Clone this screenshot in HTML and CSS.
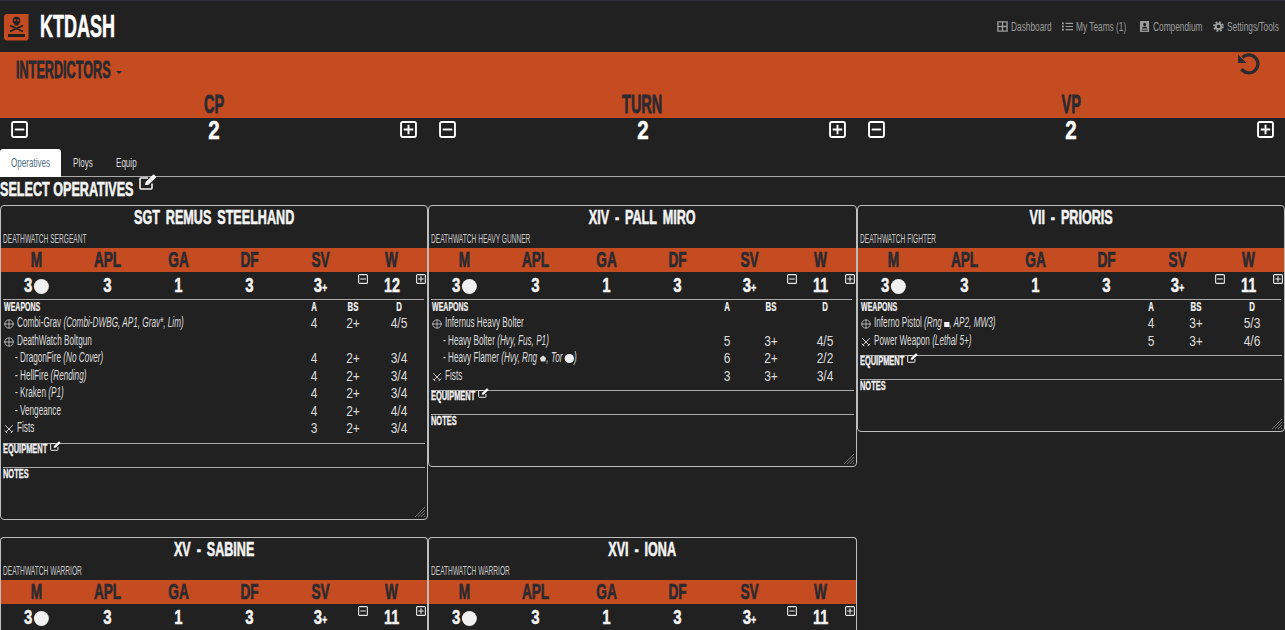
FILE: index.html
```html
<!DOCTYPE html>
<html lang="en">
  <head>
    <meta charset="UTF-8" />
    <title>KTDASH</title>
    <link rel="stylesheet" href="styles.css">
  </head>
  <body>
    <svg class="defs" aria-hidden="true">
      <symbol id="i-minus" viewBox="0 0 16 16"><rect x="1" y="1" width="14" height="14" rx="1.5" fill="none" stroke="currentColor" stroke-width="1.8"/><path d="M3.5 8h9" stroke="currentColor" stroke-width="1.8"/></symbol>
      <symbol id="i-plus" viewBox="0 0 16 16"><rect x="1" y="1" width="14" height="14" rx="1.5" fill="none" stroke="currentColor" stroke-width="1.8"/><path d="M3.5 8h9M8 3.500v9" stroke="currentColor" stroke-width="1.8"/></symbol>
      <symbol id="i-edit" viewBox="0 0 18 16"><path d="M13 9.500V14a1 1 0 0 1-1 1H2a1 1 0 0 1-1-1V5a1 1 0 0 1 1-1h7" fill="none" stroke="currentColor" stroke-width="1.6"/><path d="M6 11l.6-3L14 .8a1 1 0 0 1 1.300 0l1.600 1.600a1 1 0 0 1 0 1.300L9.200 11z" fill="currentColor"/></symbol>
      <symbol id="i-ranged" viewBox="0 0 12 12"><circle cx="6" cy="6" r="5" fill="none" stroke="currentColor" stroke-width=".9"/><path d="M0 6h12M6 1v10" stroke="currentColor" stroke-width=".9"/></symbol>
      <symbol id="i-melee" viewBox="0 0 12 12"><path d="M1.500 1.500l8 8M10.500 1.500l-8 8M1 8l3 3M11 8l-3 3" fill="none" stroke="currentColor" stroke-width="1.100"/></symbol>
      <symbol id="i-pent" viewBox="0 0 12 12" preserveAspectRatio="none"><path d="M6 1l5.500 4-2 6h-7l-2-6z" fill="currentColor"/></symbol>
      <symbol id="i-grid" viewBox="0 0 12 12"><path d="M1 1h10v10H1zM6 1v10M1 6h10" fill="none" stroke="currentColor" stroke-width="1.500"/></symbol>
      <symbol id="i-list" viewBox="0 0 12 12"><path d="M4 2.500h8M4 6h8M4 9.500h8" stroke="currentColor" stroke-width="1.300"/><path d="M0 1.500h2v2H0zM0 5h2v2H0zM0 8.500h2v2H0z" fill="currentColor"/></symbol>
      <symbol id="i-book" viewBox="0 0 12 12"><path fill-rule="evenodd" d="M2 0h9v12H2a1 1 0 0 1-1-1V1a1 1 0 0 1 1-1zM6.200 2a1.700 1.700 0 1 0 0 3.400 1.700 1.700 0 0 0 0-3.400zM3.400 8.300h5.600c0-1.500-1.200-2.300-2.800-2.300s-2.800.8-2.800 2.300zM3 9.500v1h6.500v-1z" fill="currentColor"/></symbol>
      <symbol id="i-cog" viewBox="0 0 12 12"><circle cx="6" cy="6" r="3.100" fill="none" stroke="currentColor" stroke-width="2.200"/><circle cx="6" cy="6" r="4.900" fill="none" stroke="currentColor" stroke-width="2" stroke-dasharray="2 1.850"/></symbol>
      <symbol id="i-grip" viewBox="0 0 10 10"><path d="M0 10L10 0M3 10l7-7M6 10l4-4M9 10l1-1" stroke="currentColor" stroke-width=".8"/></symbol>
    </svg>

    <header class="navbar">
      <a class="brand">
        <svg class="logo" viewBox="0 0 25 27">
          <path d="M3 0h21.500v24.500l-1.500 2H3a3 3 0 0 1-3-3V3a3 3 0 0 1 3-3z" fill="#c54c21"/>
          <circle cx="12.500" cy="6.500" r="3.800" fill="#212121"/>
          <rect x="10.500" y="9" width="4" height="2.500" fill="#212121"/>
          <circle cx="11" cy="6.300" r="1" fill="#c54c21"/>
          <circle cx="14" cy="6.300" r="1" fill="#c54c21"/>
          <path d="M6 11.500l13 6M19 11.500l-13 6" stroke="#212121" stroke-width="1.700"/>
          <rect x="4" y="20" width="17" height="3" fill="#212121"/>
        </svg>
        <span class="brand-name">KTDASH</span>
      </a>
      <nav class="nav-links">
        <a class="nav-link"><svg class="nav-icon"><use href="#i-grid"/></svg><span>Dashboard</span></a>
        <a class="nav-link"><svg class="nav-icon"><use href="#i-list"/></svg><span>My Teams (1)</span></a>
        <a class="nav-link"><svg class="nav-icon"><use href="#i-book"/></svg><span>Compendium</span></a>
        <a class="nav-link"><svg class="nav-icon"><use href="#i-cog"/></svg><span>Settings/Tools</span></a>
      </nav>
    </header>

    <section class="team-bar">
      <div class="team-top">
        <h1 class="team-name"><span>INTERDICTORS</span><i class="caret"></i></h1>
        <svg class="undo" viewBox="0 0 24 24"><path d="M6.500 5.500a9 9 0 1 1-1 11.500" fill="none" stroke="currentColor" stroke-width="3.200"/><path d="M2 2.500v8.500h8.500z" fill="currentColor"/></svg>
      </div>
      <div class="counter-heads">
        <div>CP</div>
        <div>TURN</div>
        <div>VP</div>
      </div>
    </section>

    <section class="counters">
      <div class="counter"><svg class="counter-btn"><use href="#i-minus"/></svg><span>2</span><svg class="counter-btn"><use href="#i-plus"/></svg></div>
      <div class="counter"><svg class="counter-btn"><use href="#i-minus"/></svg><span>2</span><svg class="counter-btn"><use href="#i-plus"/></svg></div>
      <div class="counter"><svg class="counter-btn"><use href="#i-minus"/></svg><span>2</span><svg class="counter-btn"><use href="#i-plus"/></svg></div>
    </section>

    <ul class="tabs">
      <li class="tab tab-operatives active"><span>Operatives</span></li>
      <li class="tab tab-ploys"><span>Ploys</span></li>
      <li class="tab"><span>Equip</span></li>
    </ul>

    <h2 class="section-title"><span>SELECT OPERATIVES</span><svg class="edit-big"><use href="#i-edit"/></svg></h2>

    <main class="cards">
      <article class="card card-one">
        <h3 class="card-title">SGT REMUS STEELHAND</h3>
        <div class="card-sub"><span>DEATHWATCH SERGEANT</span></div>
        <div class="stat-heads"><div>M</div><div>APL</div><div>GA</div><div>DF</div><div>SV</div><div>W</div></div>
        <div class="stat-vals">
          <div>3<i class="dot"></i></div><div>3</div><div>1</div><div>3</div><div>3<small>+</small></div>
          <div class="wounds"><svg class="w-btn"><use href="#i-minus"/></svg><span>12</span><svg class="w-btn"><use href="#i-plus"/></svg></div>
        </div>
        <table class="weapons">
          <tr><th><span class="name">WEAPONS</span></th><th>A</th><th>BS</th><th>D</th></tr>
          <tr><td><svg class="w-icon"><use href="#i-ranged"/></svg><span class="name">Combi-Grav <em>(Combi-DWBG, AP1, Grav*, Lim)</em></span></td><td>4</td><td>2+</td><td>4/5</td></tr>
          <tr><td><svg class="w-icon"><use href="#i-ranged"/></svg><span class="name">DeathWatch Boltgun</span></td><td></td><td></td><td></td></tr>
          <tr><td class="sub"><span class="name">- DragonFire <em>(No Cover)</em></span></td><td>4</td><td>2+</td><td>3/4</td></tr>
          <tr><td class="sub"><span class="name">- HellFire <em>(Rending)</em></span></td><td>4</td><td>2+</td><td>3/4</td></tr>
          <tr><td class="sub"><span class="name">- Kraken <em>(P1)</em></span></td><td>4</td><td>2+</td><td>3/4</td></tr>
          <tr><td class="sub"><span class="name">- Vengeance</span></td><td>4</td><td>2+</td><td>4/4</td></tr>
          <tr><td><svg class="w-icon"><use href="#i-melee"/></svg><span class="name">Fists</span></td><td>3</td><td>2+</td><td>3/4</td></tr>
        </table>
        <div class="block equip"><span>EQUIPMENT</span><svg class="edit-small"><use href="#i-edit"/></svg></div>
        <div class="block notes"><span>NOTES</span><svg class="grip"><use href="#i-grip"/></svg></div>
      </article>

      <article class="card card-two">
        <h3 class="card-title">XIV - PALL MIRO</h3>
        <div class="card-sub"><span>DEATHWATCH HEAVY GUNNER</span></div>
        <div class="stat-heads"><div>M</div><div>APL</div><div>GA</div><div>DF</div><div>SV</div><div>W</div></div>
        <div class="stat-vals">
          <div>3<i class="dot"></i></div><div>3</div><div>1</div><div>3</div><div>3<small>+</small></div>
          <div class="wounds"><svg class="w-btn"><use href="#i-minus"/></svg><span>11</span><svg class="w-btn"><use href="#i-plus"/></svg></div>
        </div>
        <table class="weapons">
          <tr><th><span class="name">WEAPONS</span></th><th>A</th><th>BS</th><th>D</th></tr>
          <tr><td><svg class="w-icon"><use href="#i-ranged"/></svg><span class="name">Infernus Heavy Bolter</span></td><td></td><td></td><td></td></tr>
          <tr><td class="sub"><span class="name">- Heavy Bolter <em>(Hvy, Fus, P1)</em></span></td><td>5</td><td>3+</td><td>4/5</td></tr>
          <tr><td class="sub"><span class="name">- Heavy Flamer <em>(Hvy, Rng <svg class="mark"><use href="#i-pent"/></svg>, Tor <i class="mark-dot"></i>)</em></span></td><td>6</td><td>2+</td><td>2/2</td></tr>
          <tr><td><svg class="w-icon"><use href="#i-melee"/></svg><span class="name">Fists</span></td><td>3</td><td>3+</td><td>3/4</td></tr>
        </table>
        <div class="block equip"><span>EQUIPMENT</span><svg class="edit-small"><use href="#i-edit"/></svg></div>
        <div class="block notes"><span>NOTES</span><svg class="grip"><use href="#i-grip"/></svg></div>
      </article>

      <article class="card card-three">
        <h3 class="card-title">VII - PRIORIS</h3>
        <div class="card-sub"><span>DEATHWATCH FIGHTER</span></div>
        <div class="stat-heads"><div>M</div><div>APL</div><div>GA</div><div>DF</div><div>SV</div><div>W</div></div>
        <div class="stat-vals">
          <div>3<i class="dot"></i></div><div>3</div><div>1</div><div>3</div><div>3<small>+</small></div>
          <div class="wounds"><svg class="w-btn"><use href="#i-minus"/></svg><span>11</span><svg class="w-btn"><use href="#i-plus"/></svg></div>
        </div>
        <table class="weapons">
          <tr><th><span class="name">WEAPONS</span></th><th>A</th><th>BS</th><th>D</th></tr>
          <tr><td><svg class="w-icon"><use href="#i-ranged"/></svg><span class="name">Inferno Pistol <em>(Rng <i class="mark-square"></i>, AP2, MW3)</em></span></td><td>4</td><td>3+</td><td>5/3</td></tr>
          <tr><td><svg class="w-icon"><use href="#i-melee"/></svg><span class="name">Power Weapon <em>(Lethal 5+)</em></span></td><td>5</td><td>3+</td><td>4/6</td></tr>
        </table>
        <div class="block equip"><span>EQUIPMENT</span><svg class="edit-small"><use href="#i-edit"/></svg></div>
        <div class="block notes"><span>NOTES</span><svg class="grip"><use href="#i-grip"/></svg></div>
      </article>

      <article class="card card-cut">
        <h3 class="card-title">XV - SABINE</h3>
        <div class="card-sub"><span>DEATHWATCH WARRIOR</span></div>
        <div class="stat-heads"><div>M</div><div>APL</div><div>GA</div><div>DF</div><div>SV</div><div>W</div></div>
        <div class="stat-vals">
          <div>3<i class="dot"></i></div><div>3</div><div>1</div><div>3</div><div>3<small>+</small></div>
          <div class="wounds"><svg class="w-btn"><use href="#i-minus"/></svg><span>11</span><svg class="w-btn"><use href="#i-plus"/></svg></div>
        </div>
      </article>

      <article class="card card-cut">
        <h3 class="card-title">XVI - IONA</h3>
        <div class="card-sub"><span>DEATHWATCH WARRIOR</span></div>
        <div class="stat-heads"><div>M</div><div>APL</div><div>GA</div><div>DF</div><div>SV</div><div>W</div></div>
        <div class="stat-vals">
          <div>3<i class="dot"></i></div><div>3</div><div>1</div><div>3</div><div>3<small>+</small></div>
          <div class="wounds"><svg class="w-btn"><use href="#i-minus"/></svg><span>11</span><svg class="w-btn"><use href="#i-plus"/></svg></div>
        </div>
      </article>
    </main>
  </body>
</html>
```

FILE: styles.css
```css
html,
body {
  height: 100%;
  margin: 0;
  overflow: hidden;
}
body {
  background-color: #212121;
  color: #e8e8e8;
  font-family: "Liberation Sans", sans-serif;
}
.defs {
  display: none;
}

/* top nav */
.navbar {
  display: flex;
  justify-content: space-between;
  align-items: center;
  height: 51px;
  border-top: 1px solid #2c2c34;
  padding: 0 4px;
}
.brand {
  display: flex;
  align-items: center;
  gap: 11px;
  margin-top: 2px;
}
.logo {
  width: 25px;
  height: 27px;
}
.brand-name {
  display: inline-block;
  margin-top: -2px;
  color: #fff;
  font-size: 31px;
  font-weight: 700;
  line-height: 1;
  -webkit-text-stroke: 0.6px #fff;
  transform: scaleX(0.58);
  transform-origin: left center;
}
.nav-links {
  display: grid;
  grid-template-columns: 65px 77px 74px 68px;
  margin-bottom: 1px;
}
.nav-link {
  display: flex;
  align-items: center;
  gap: 3px;
  color: #9c9c9c;
  font-size: 13px;
  white-space: nowrap;
}
.nav-link span {
  display: inline-block;
  transform: scaleX(0.64);
  transform-origin: left center;
}
.nav-icon {
  flex: none;
  width: 11px;
  height: 11px;
}

/* orange team header */
.team-bar {
  background-color: #c54c21;
  color: #2a2a30;
  height: 66px;
}
.team-top {
  display: flex;
  justify-content: space-between;
  height: 36px;
  padding: 0 25px 0 16px;
}
.team-name {
  display: flex;
  align-items: center;
  height: 20px;
  margin: 8px 0 0 0;
  font-size: 23px;
  white-space: nowrap;
}
.team-name span {
  width: 100px;
  -webkit-text-stroke: 0.8px #2a2a30;
  transform: scaleX(0.55);
  transform-origin: left center;
}
.caret {
  margin-top: 5px;
  border-top: 3px solid #2a2a30;
  border-left: 3px solid transparent;
  border-right: 3px solid transparent;
}
.undo {
  width: 24px;
  height: 24px;
}
.counter-heads {
  display: grid;
  grid-template-columns: repeat(3, 1fr);
  text-align: center;
  font-size: 25px;
  font-weight: 700;
  line-height: 32px;
}
.counter-heads div {
  -webkit-text-stroke: 0.8px #2a2a30;
  transform: scaleX(0.58);
}
.counters {
  display: grid;
  grid-template-columns: repeat(3, 1fr);
  height: 31px;
}
.counter {
  display: flex;
  justify-content: space-between;
  align-items: flex-start;
  padding: 0 11px;
  color: #fff;
  font-size: 25px;
  font-weight: 700;
  line-height: 25px;
}
.counter span {
  -webkit-text-stroke: 0.5px #fff;
  transform: scaleX(0.82);
}
.counter-btn {
  width: 17px;
  height: 17px;
  margin-top: 3px;
}

/* tabs */
.tabs {
  display: flex;
  margin: 0;
  padding: 0;
  list-style: none;
  height: 27px;
  border-bottom: 1px solid #aaa;
}
.tab {
  box-sizing: border-box;
  width: 50px;
  padding-left: 11px;
  color: #dcdcdc;
  font-size: 13px;
  line-height: 28px;
  white-space: nowrap;
}
.tab span {
  display: inline-block;
  transform: scaleX(0.62);
  transform-origin: left center;
}
.tab-operatives {
  width: 62px;
}
.tab-ploys {
  width: 43px;
}
.tab.active {
  background-color: #fff;
  border-radius: 3px 3px 0 0;
  color: #4f6f86;
  height: 28px;
  margin-right: 1px;
  width: 61px;
}
.section-title {
  display: flex;
  margin: 0;
  height: 28px;
  color: #f4f4f4;
  font-size: 20px;
  line-height: 24px;
  white-space: nowrap;
}
.section-title span {
  width: 139px;
  -webkit-text-stroke: 0.6px #f4f4f4;
  transform: scaleX(0.63);
  transform-origin: left center;
}
.edit-big {
  width: 18px;
  height: 16px;
  margin-top: -3px;
}

/* operative cards */
.cards {
  display: flex;
  flex-wrap: wrap;
  align-items: flex-start;
}
.card {
  box-sizing: border-box;
  width: 33.3333%;
  margin-bottom: 17px;
  border: 1px solid #bdbdbd;
  border-radius: 4px;
}
.card-cut {
  height: 93px;
  margin-bottom: 0;
  border-bottom: 0;
  border-radius: 4px 4px 0 0;
  overflow: hidden;
}
.card-title {
  margin: 0;
  height: 27px;
  color: #f4f4f4;
  font-size: 21px;
  line-height: 22px;
  text-align: center;
  white-space: nowrap;
  word-spacing: 4px;
  -webkit-text-stroke: 0.6px #f4f4f4;
  transform: scaleX(0.6);
}
.card-sub {
  height: 15px;
  padding: 0 2px;
  font-size: 12px;
  line-height: 13px;
  color: #c8c8c8;
  white-space: nowrap;
}
.card-sub span {
  display: inline-block;
  transform: scaleX(0.55);
  transform-origin: left center;
}
.stat-heads,
.stat-vals {
  display: grid;
  grid-template-columns: repeat(6, 1fr);
  text-align: center;
  font-weight: 700;
}
.stat-heads {
  height: 24px;
  background-color: #c54c21;
  color: #2a2a30;
  font-size: 22px;
  line-height: 24px;
}
.stat-heads div {
  -webkit-text-stroke: 0.7px #2a2a30;
  transform: scaleX(0.62);
}
.stat-vals {
  height: 27px;
  color: #f4f4f4;
  font-size: 20px;
  line-height: 27px;
}
.stat-vals > div {
  -webkit-text-stroke: 0.4px #f4f4f4;
  transform: scaleX(0.75);
}
.stat-vals small {
  font-size: 12px;
}
.dot {
  display: inline-block;
  width: 20px;
  height: 15px;
  margin-left: 2px;
  border-radius: 50%;
  background-color: #f0f0f0;
  vertical-align: -2px;
}
.stat-vals > .wounds {
  position: relative;
  transform: none;
}
.wounds span {
  display: inline-block;
  transform: scaleX(0.72);
}
.w-btn {
  position: absolute;
  top: 2px;
  width: 10px;
  height: 10px;
  color: #e8e8e8;
  stroke-width: 0;
}
.w-btn:first-child {
  left: 2px;
}
.w-btn:last-child {
  right: 1px;
}

/* weapon table */
.weapons {
  width: 421px;
  margin: 0 2px;
  border-collapse: collapse;
  table-layout: fixed;
  border-top: 1px solid #aaa;
  color: #dcdcdc;
}
.weapons th {
  height: 14px;
  padding: 0;
  font-size: 12px;
  line-height: 14px;
  color: #f4f4f4;
  text-align: center;
  -webkit-text-stroke: 0.2px #f4f4f4;
}
.weapons th:nth-child(n+2) {
  transform: scaleX(0.65);
}
.weapons th:first-child {
  text-align: left;
  padding-left: 1px;
}
.weapons td {
  height: 17.5px;
  padding: 0;
  font-size: 15px;
  line-height: 17px;
  text-align: center;
  transform: scaleX(0.8);
}
.weapons td:first-child {
  text-align: left;
  white-space: nowrap;
  font-size: 14px;
  transform: none;
}
.weapons td.sub {
  padding-left: 12px;
}
.name {
  display: inline-block;
  transform: scaleX(0.585);
  transform-origin: left center;
}
.card-one .weapons th:nth-child(2) { width: 36px; }
.card-one .weapons th:nth-child(3) { width: 42px; }
.card-one .weapons th:nth-child(4) { width: 50px; }
.card-two .weapons th:nth-child(2) { width: 34px; }
.card-two .weapons th:nth-child(3) { width: 54px; }
.card-two .weapons th:nth-child(4) { width: 54px; }
.card-three .weapons th:nth-child(2) { width: 36px; }
.card-three .weapons th:nth-child(3) { width: 54px; }
.card-three .weapons th:nth-child(4) { width: 58px; }
.w-icon {
  width: 10px;
  height: 10px;
  margin: 0 3px 0 1px;
  vertical-align: -2px;
}
.mark {
  width: 12px;
  height: 7px;
}
.mark-dot {
  display: inline-block;
  width: 16px;
  height: 9px;
  border-radius: 50%;
  background-color: #f0f0f0;
  vertical-align: -1px;
}
.mark-square {
  display: inline-block;
  width: 9px;
  height: 5px;
  background-color: #f0f0f0;
}

/* equipment and notes */
.block {
  display: flex;
  margin: 0 2px;
  border-top: 1px solid #aaa;
  color: #f4f4f4;
  font-size: 12px;
  font-weight: 700;
  line-height: 13px;
  white-space: nowrap;
}
.block span {
  -webkit-text-stroke: 0.3px #f4f4f4;
  transform: scaleX(0.62);
  transform-origin: left center;
}
.equip {
  height: 23px;
  margin-top: 6px;
}
.equip span {
  width: 47px;
  margin-top: -1px;
}
.edit-small {
  width: 11px;
  height: 10px;
  margin-top: -3px;
}
.notes {
  justify-content: space-between;
  align-items: flex-end;
  height: 49px;
  padding-bottom: 2px;
}
.notes span {
  align-self: flex-start;
}
.grip {
  width: 10px;
  height: 10px;
  color: #8a8a8a;
}
```
